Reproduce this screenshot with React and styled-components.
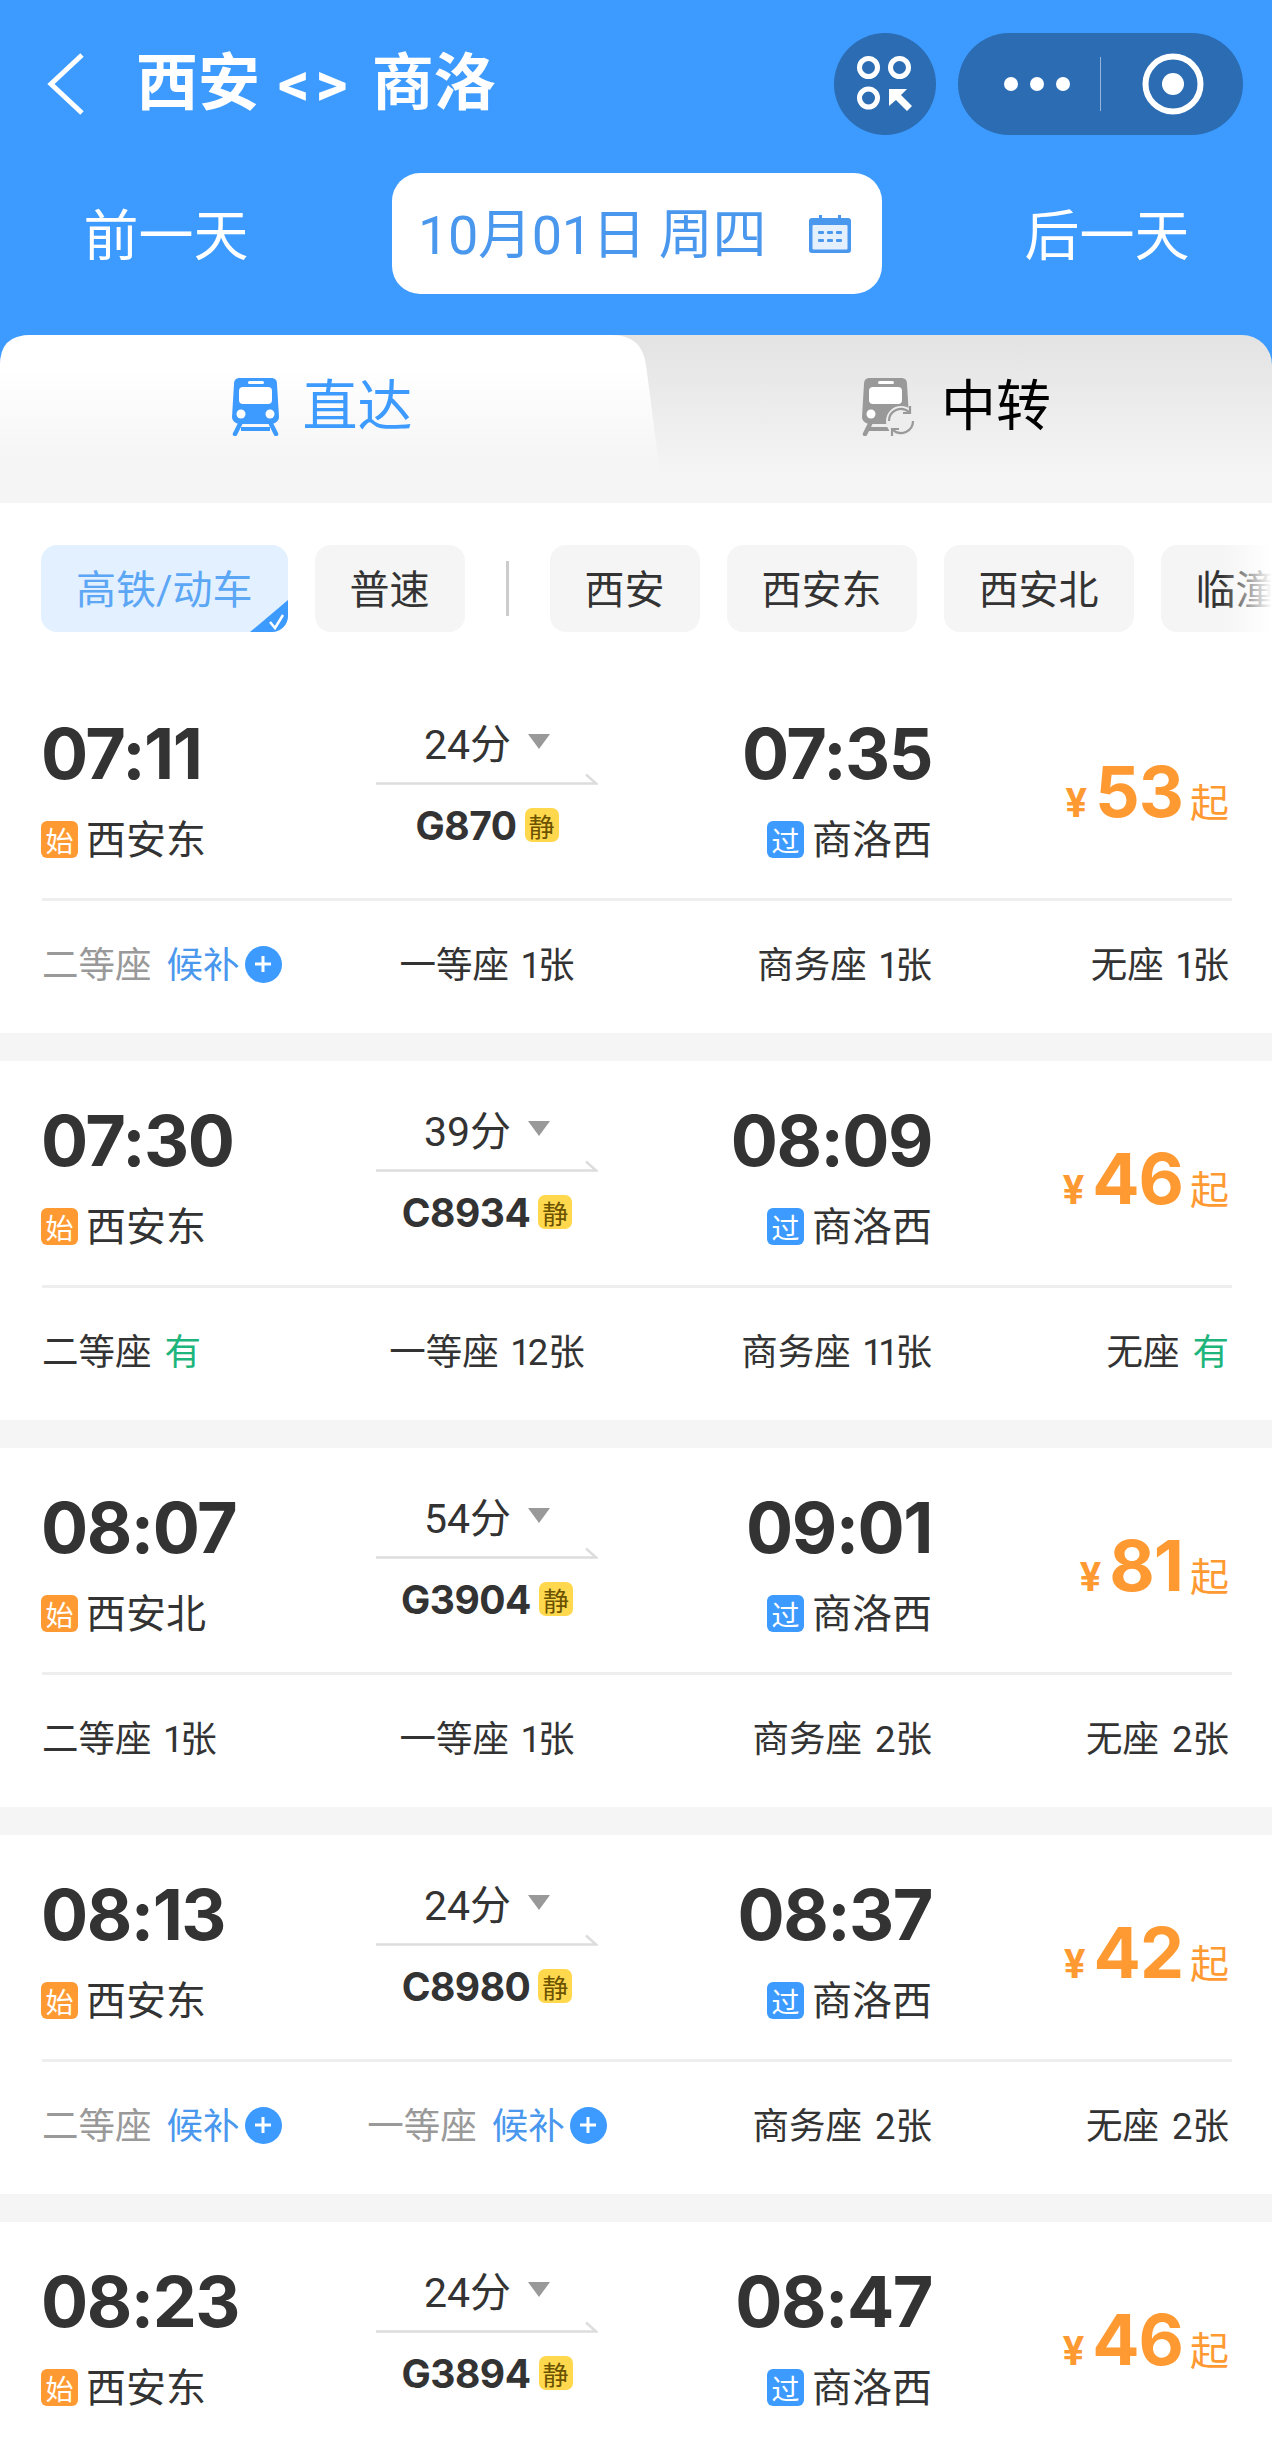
import styled, { createGlobalStyle } from "styled-components";

const BLUE = "#3d9bff";
const ORANGE = "#ff9a33";
const DIGITS = 'Inter, Roboto, "Noto Sans CJK SC", sans-serif';

const trains = [
  {
    from: "07:11",
    fromStation: "西安东",
    duration: "24分",
    code: "G870",
    to: "07:35",
    toStation: "商洛西",
    price: 53,
    seats: [
      { name: "二等座", wait: true },
      { name: "一等座", value: "1张" },
      { name: "商务座", value: "1张" },
      { name: "无座", value: "1张" },
    ],
  },
  {
    from: "07:30",
    fromStation: "西安东",
    duration: "39分",
    code: "C8934",
    to: "08:09",
    toStation: "商洛西",
    price: 46,
    seats: [
      { name: "二等座", value: "有", plenty: true },
      { name: "一等座", value: "12张" },
      { name: "商务座", value: "11张" },
      { name: "无座", value: "有", plenty: true },
    ],
  },
  {
    from: "08:07",
    fromStation: "西安北",
    duration: "54分",
    code: "G3904",
    to: "09:01",
    toStation: "商洛西",
    price: 81,
    seats: [
      { name: "二等座", value: "1张" },
      { name: "一等座", value: "1张" },
      { name: "商务座", value: "2张" },
      { name: "无座", value: "2张" },
    ],
  },
  {
    from: "08:13",
    fromStation: "西安东",
    duration: "24分",
    code: "C8980",
    to: "08:37",
    toStation: "商洛西",
    price: 42,
    seats: [
      { name: "二等座", wait: true },
      { name: "一等座", wait: true },
      { name: "商务座", value: "2张" },
      { name: "无座", value: "2张" },
    ],
  },
  {
    from: "08:23",
    fromStation: "西安东",
    duration: "24分",
    code: "G3894",
    to: "08:47",
    toStation: "商洛西",
    price: 46,
    seats: [
      { name: "二等座", value: "1张" },
      { name: "一等座", value: "1张" },
      { name: "商务座", value: "1张" },
      { name: "无座", value: "1张" },
    ],
  },
];

function TrainIcon({ color, transfer }) {
  return (
    <svg width={transfer ? 55 : 49} height="59" viewBox={transfer ? "0 0 55 59" : "0 0 49 59"}>
      <path
        d="M9 1h31c4 0 6 2 6 6l2 33c0 4-4 7-8 7H9c-4 0-8-3-8-7l2-33c0-4 2-6 6-6z"
        fill={color}
      />
      <rect x="8" y="10" width="33" height="17" rx="4" fill="#fff" />
      <rect x="17" y="4" width="16" height="3" rx="1.5" fill="#fff" />
      <circle cx="10" cy="37" r="4.5" fill="#fff" />
      {!transfer && <circle cx="39" cy="37" r="4.5" fill="#fff" />}
      <path d="M9 47l-5 10" stroke={color} strokeWidth="4.500" strokeLinecap="round" />
      {!transfer && <path d="M40 47l5 10" stroke={color} strokeWidth="4.500" strokeLinecap="round" />}
      <path d={transfer ? "M8 52h20" : "M10 52h29"} stroke={color} strokeWidth="4" />
      {transfer && (
        <g fill="none">
          <circle cx="40" cy="44" r="15" fill="#ededed" />
          <path d="M28 44a12 12 0 0 1 20-9" stroke="#999" strokeWidth="2.200" />
          <path d="M52 44a12 12 0 0 1-20 9" stroke="#999" strokeWidth="2.200" />
          <path d="M49 29v7h-7M31 59v-7h7" stroke="#999" strokeWidth="2.200" />
        </g>
      )}
    </svg>
  );
}

function Seat({ seat, align }) {
  return (
    <SeatCell $align={align}>
      <SeatName $muted={seat.wait}>{seat.name}</SeatName>
      {seat.wait ? (
        <>
          <WaitText>候补</WaitText>
          <PlusDot>
            <svg width="20" height="20" viewBox="0 0 20 20">
              <path d="M10 2v16M2 10h16" stroke="#fff" strokeWidth="3" />
            </svg>
          </PlusDot>
        </>
      ) : (
        <SeatValue $plenty={seat.plenty}>{seat.value}</SeatValue>
      )}
    </SeatCell>
  );
}

function TrainCard({ train }) {
  return (
    <Card>
      <Grid>
        <Depart>
          <Time>{train.from}</Time>
          <Station>
            <Tag $color={ORANGE}>始</Tag>
            {train.fromStation}
          </Station>
        </Depart>
        <Middle>
          <Duration>
            {train.duration}
            <Caret />
          </Duration>
          <Arrow viewBox="0 0 222 12" width="222" height="12">
            <path d="M0 10.5h220l-10-9" fill="none" stroke="#ddd" strokeWidth="2.500" />
          </Arrow>
          <CodeRow>
            <Code>{train.code}</Code>
            <Quiet>静</Quiet>
          </CodeRow>
        </Middle>
        <Arrive>
          <Time>{train.to}</Time>
          <Station>
            <Tag $color={BLUE}>过</Tag>
            {train.toStation}
          </Station>
        </Arrive>
        <Price>
          <Yen>¥</Yen>
          <Amount>{train.price}</Amount>
          <From>起</From>
        </Price>
      </Grid>
      <Line />
      <SeatGrid>
        <Seat seat={train.seats[0]} align="flex-start" />
        <Seat seat={train.seats[1]} align="center" />
        <Seat seat={train.seats[2]} align="flex-end" />
        <Seat seat={train.seats[3]} align="flex-end" />
      </SeatGrid>
    </Card>
  );
}

export default function App() {
  return (
    <Page>
      <GlobalStyle />
      <Header>
        <TopBar>
          <Back viewBox="0 0 40 62" width="40" height="62">
            <path d="M36 2L5 31l31 29" fill="none" stroke="#fff" strokeWidth="5" />
          </Back>
          <Title>
            西安<Sep>&lt;&gt;</Sep>商洛
          </Title>
          <RoundButton>
            <svg width="56" height="56" viewBox="0 0 56 56">
              <g fill="none" stroke="#fff" strokeWidth="5">
                <circle cx="11.500" cy="11.500" r="9" />
                <circle cx="42.500" cy="11.500" r="9" />
                <circle cx="11.500" cy="42" r="9" />
              </g>
              <path d="M32 33h18l-6 6 11 11-5 5-11-11-7 6z" fill="#fff" />
            </svg>
          </RoundButton>
          <Capsule>
            <Dots>
              <Dot />
              <Dot />
              <Dot />
            </Dots>
            <CapsuleLine />
            <svg width="64" height="64" viewBox="0 0 64 64">
              <circle cx="32" cy="32" r="27.500" fill="none" stroke="#fff" strokeWidth="6" />
              <circle cx="32" cy="32" r="11" fill="#fff" />
            </svg>
          </Capsule>
        </TopBar>
        <DateBar>
          <DayLink $width={332}>前一天</DayLink>
          <DatePill>
            <span>10月01日 周四</span>
            <svg width="44" height="40" viewBox="0 0 44 40">
              <path
                d="M4 4h7V1h3v3h16V1h3v3h7c2 0 3 1 3 3v29c0 2-1 3-3 3H4c-2 0-3-1-3-3V7c0-2 1-3 3-3z"
                fill="#4a97ee"
              />
              <rect x="4.500" y="11" width="35" height="24.500" rx="1" fill="#e4f0fd" />
              <g fill="#4a97ee">
                <rect x="10" y="17" width="6" height="3" rx="1" />
                <rect x="19" y="17" width="6" height="3" rx="1" />
                <rect x="28" y="17" width="6" height="3" rx="1" />
                <rect x="10" y="25" width="6" height="3" rx="1" />
                <rect x="19" y="25" width="6" height="3" rx="1" />
                <rect x="28" y="25" width="6" height="3" rx="1" />
              </g>
            </svg>
          </DatePill>
          <DayLink $width={330}>后一天</DayLink>
        </DateBar>
        <Tabs>
          <ActiveTab>
            <TrainIcon color={BLUE} />
            直达
          </ActiveTab>
          <OtherTab>
            <TrainIcon color="#999" transfer />
            中转
          </OtherTab>
        </Tabs>
      </Header>
      <Filters>
        <Chip $active>
          高铁/动车
          <Corner viewBox="0 0 38 32" width="38" height="32">
            <path d="M38 0v32H0z" fill={BLUE} />
            <path d="M20 22l5 6 8-13" fill="none" stroke="#fff" strokeWidth="2.500" />
          </Corner>
        </Chip>
        <Chip>普速</Chip>
        <ChipRule />
        <Chip>西安</Chip>
        <Chip>西安东</Chip>
        <Chip>西安北</Chip>
        <Chip>临潼</Chip>
        <FilterFade />
      </Filters>
      <List>
        {trains.map((train) => (
          <TrainCard key={train.code} train={train} />
        ))}
      </List>
    </Page>
  );
}

const GlobalStyle = createGlobalStyle`
  html, body {
    margin: 0;
    padding: 0;
    background: #f5f5f5;
  }
  * {
    box-sizing: border-box;
  }
`;

const Page = styled.div`
  width: 1272px;
  height: 2446px;
  overflow: hidden;
  background: #f5f5f5;
  color: #333;
  font-family: Roboto, "Noto Sans CJK SC", sans-serif;
`;

const Header = styled.header`
  background: ${BLUE};
  padding-top: 33px;
`;

const TopBar = styled.div`
  display: flex;
  align-items: center;
  height: 102px;
  padding: 0 29px 0 46px;
`;

const Back = styled.svg`
  flex: none;
`;

const Title = styled.h1`
  flex: 1;
  display: flex;
  align-items: center;
  margin: 0 0 0 50px;
  color: #fff;
  font-size: 62px;
  font-weight: 700;
  line-height: 1;
  white-space: nowrap;
`;

const Sep = styled.span`
  margin: 0 18px;
  font-size: 62px;
  letter-spacing: 6px;
`;

const RoundButton = styled.div`
  display: flex;
  align-items: center;
  justify-content: center;
  width: 102px;
  height: 102px;
  margin-right: 22px;
  border-radius: 50%;
  background: #2b6cb3;
`;

const Capsule = styled.div`
  display: flex;
  align-items: center;
  width: 285px;
  height: 102px;
  padding-left: 46px;
  border-radius: 51px;
  background: #2b6cb3;
`;

const Dots = styled.div`
  display: flex;
  gap: 12px;
`;

const Dot = styled.span`
  width: 14px;
  height: 14px;
  border-radius: 50%;
  background: #fff;
`;

const CapsuleLine = styled.span`
  width: 1px;
  height: 54px;
  margin: 0 40px 0 30px;
  background: rgba(255, 255, 255, 0.5);
`;

const DateBar = styled.div`
  display: flex;
  align-items: center;
  gap: 60px;
  height: 121px;
  margin: 38px 0 41px;
`;

const DayLink = styled.div`
  flex: none;
  width: ${(p) => p.$width}px;
  padding-bottom: 6px;
  color: #fff;
  font-size: 55px;
  text-align: center;
`;

const DatePill = styled.div`
  flex: none;
  display: flex;
  align-items: center;
  justify-content: space-between;
  width: 490px;
  height: 121px;
  padding: 0 30px 0 26px;
  border-radius: 28px;
  background: #fff;
  color: #4a97ee;
  font-size: 54px;
  letter-spacing: -0.3px;
  white-space: nowrap;

  span {
    padding-bottom: 7px;
  }
`;

const Tabs = styled.div`
  position: relative;
  display: grid;
  grid-template-columns: 664px 1fr;
  height: 168px;
  border-radius: 30px 30px 0 0;
  background: linear-gradient(#e3e3e3, #f5f5f5 85%);
`;

const ActiveTab = styled.div`
  display: flex;
  align-items: flex-start;
  justify-content: center;
  gap: 22px;
  padding: 42px 20px 0 0;
  background: linear-gradient(#fff 20%, #f5f5f5 75%);
  clip-path: path("M0 30Q0 0 30 0H612Q642 0 646 30L664 168H0Z");
  color: ${BLUE};
  font-size: 55px;
  line-height: 58px;
`;

const OtherTab = styled.div`
  display: flex;
  align-items: flex-start;
  justify-content: center;
  gap: 25px;
  padding: 42px 24px 0 0;
  color: #000;
  font-size: 55px;
  line-height: 58px;
`;

const Filters = styled.div`
  position: relative;
  display: flex;
  align-items: center;
  gap: 27px;
  height: 171px;
  padding-left: 41px;
  overflow: hidden;
  background: #fff;
`;

const Chip = styled.div`
  position: relative;
  flex: none;
  height: 87px;
  padding: 4px 35px 0;
  overflow: hidden;
  border-radius: 16px;
  background: ${(p) => (p.$active ? "#e3f0ff" : "#f5f5f5")};
  color: ${(p) => (p.$active ? "#5ba6f5" : "#333")};
  font-size: 40px;
  line-height: 83px;
`;

const Corner = styled.svg`
  position: absolute;
  right: 0;
  bottom: 0;
`;

const ChipRule = styled.span`
  flex: none;
  width: 3px;
  height: 55px;
  margin: 0 14px;
  background: #ccc;
`;

const FilterFade = styled.div`
  position: absolute;
  top: 0;
  right: 0;
  bottom: 0;
  width: 50px;
  background: linear-gradient(to right, rgba(255, 255, 255, 0), #fff);
`;

const List = styled.div`
  display: flex;
  flex-direction: column;
  gap: 28px;
`;

const Card = styled.article`
  flex: none;
  height: 359px;
  padding: 36px 0 0 42px;
  background: #fff;
`;

const Grid = styled.div`
  display: grid;
  grid-template-columns: 320px 250px 320px 297px;
  height: 152px;
`;

const Depart = styled.div`
  display: flex;
  flex-direction: column;
  align-items: flex-start;
`;

const Arrive = styled(Depart)`
  align-items: flex-end;
`;

const Time = styled.div`
  margin-left: -1px;
  color: #333;
  font-family: ${DIGITS};
  font-size: 70px;
  font-weight: 700;
  letter-spacing: -1.5px;
  line-height: 88px;
`;

const Station = styled.div`
  display: flex;
  align-items: center;
  gap: 8px;
  height: 40px;
  margin-top: 19px;
  color: #333;
  font-size: 40px;
`;

const Tag = styled.span`
  display: flex;
  align-items: center;
  justify-content: center;
  width: 37px;
  height: 37px;
  margin: 5px 0 0 -1px;
  border-radius: 6px;
  background: ${(p) => p.$color};
  color: #fff;
  font-size: 28px;
`;

const Middle = styled.div`
  display: flex;
  flex-direction: column;
  align-items: center;
`;

const Duration = styled.div`
  display: flex;
  align-items: center;
  gap: 17px;
  height: 50px;
  margin-top: 6px;
  color: #333;
  font-size: 41px;
`;

const Caret = styled.span`
  width: 0;
  height: 0;
  border-left: 11px solid transparent;
  border-right: 11px solid transparent;
  border-top: 15px solid #999;
`;

const Arrow = styled.svg`
  display: block;
  margin-top: 7px;
`;

const CodeRow = styled.div`
  display: flex;
  align-items: center;
  gap: 8px;
  height: 40px;
  margin-top: 20px;
`;

const Code = styled.span`
  color: #333;
  font-family: ${DIGITS};
  font-size: 39px;
  font-weight: 700;
  letter-spacing: -0.5px;
`;

const Quiet = styled.span`
  display: flex;
  align-items: center;
  justify-content: center;
  width: 34px;
  height: 34px;
  border-radius: 7px;
  background: #ffd84d;
  color: #6b5200;
  font-size: 26px;
`;

const Price = styled.div`
  display: flex;
  align-items: baseline;
  justify-content: flex-end;
  padding-top: 47px;
  color: ${ORANGE};
  line-height: 1;
`;

const Yen = styled.span`
  margin-right: 8px;
  font-size: 40px;
  font-weight: 700;
`;

const Amount = styled.span`
  font-family: ${DIGITS};
  font-size: 70px;
  font-weight: 700;
  letter-spacing: -1px;
`;

const From = styled.span`
  margin-left: 7px;
  font-size: 39px;
`;

const Line = styled.div`
  width: 1190px;
  height: 3px;
  margin-top: 36px;
  background: #eee;
`;

const SeatGrid = styled.div`
  display: grid;
  grid-template-columns: 320px 250px 320px 297px;
  margin-top: 41px;
`;

const SeatCell = styled.div`
  display: flex;
  align-items: center;
  justify-content: ${(p) => p.$align};
  height: 40px;
  font-size: 36.5px;
  font-variant-numeric: proportional-nums;
  white-space: nowrap;
`;

const SeatName = styled.span`
  color: ${(p) => (p.$muted ? "#999" : "#333")};
`;

const SeatValue = styled.span`
  margin-left: 13px;
  color: ${(p) => (p.$plenty ? "#1db57c" : "#333")};
`;

const WaitText = styled.span`
  margin-left: 15px;
  color: #4a97ee;
`;

const PlusDot = styled.span`
  display: flex;
  align-items: center;
  justify-content: center;
  width: 37px;
  height: 37px;
  margin: 4px 0 0 5px;
  border-radius: 50%;
  background: ${BLUE};
`;
